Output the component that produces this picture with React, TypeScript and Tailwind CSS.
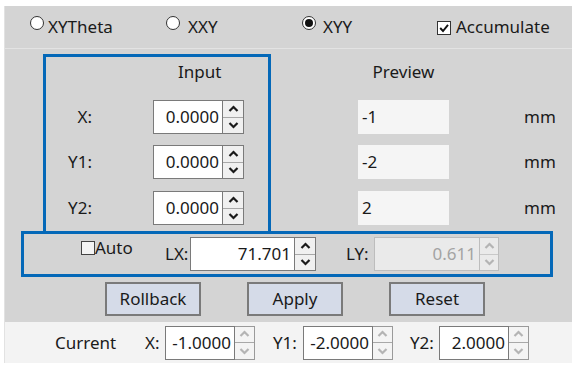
import React from "react";

const Up = ({ c }: { c: string }) => (
  <svg width="11" height="8" viewBox="0 0 11 8">
    <polyline points="1.5,6 5.5,2 9.5,6" fill="none" stroke={c} strokeWidth="2.2" />
  </svg>
);
const Down = ({ c }: { c: string }) => (
  <svg width="11" height="8" viewBox="0 0 11 8">
    <polyline points="1.5,2 5.5,6 9.5,2" fill="none" stroke={c} strokeWidth="2.2" />
  </svg>
);

function Spin({
  value,
  textW,
  btnW,
  disabled = false,
  lightArrows = false,
}: {
  value: string;
  textW: string;
  btnW: string;
  disabled?: boolean;
  lightArrows?: boolean;
}) {
  const arrow = disabled || lightArrows ? "#b4b4b4" : "#1a1a1a";
  return (
    <div className="flex h-[34px]">
      <div
        className={`${textW} h-full flex items-center justify-end pr-[3px] border ${
          disabled
            ? "bg-[#eaeaea] border-[#bdbdbd] text-[#a3a3a3]"
            : "bg-white border-[#7a7a7a] text-[#1a1a1a]"
        }`}
      >
        {value}
      </div>
      <div
        className={`${btnW} h-full flex flex-col border border-l-0 ${
          disabled ? "border-[#bdbdbd] bg-[#eaeaea]" : lightArrows ? "border-[#9a9a9a] bg-[#f4f4f4]" : "border-[#7a7a7a] bg-[#f0f0f0]"
        }`}
      >
        <div
          className={`flex-1 flex items-center justify-center border-b ${
            disabled ? "border-[#c8c8c8]" : "border-[#a8a8a8]"
          }`}
        >
          <Up c={arrow} />
        </div>
        <div className="flex-1 flex items-center justify-center">
          <Down c={arrow} />
        </div>
      </div>
    </div>
  );
}

const Radio = ({ on }: { on?: boolean }) => (
  <div className="mt-[10px] w-[14px] h-[14px] rounded-full border border-[#333] bg-white flex items-center justify-center shrink-0">
    {on && <div className="w-[8px] h-[8px] rounded-full bg-[#111]" />}
  </div>
);

export default function App() {
  return (
    <div className="w-[579px] h-[372px] bg-white pt-[6px] pl-[4px] font-['Noto_Sans',sans-serif] text-[17px] leading-[22px] text-[#1a1a1a] overflow-hidden">
      <div className="w-[568px] border-l border-[#e2e2e2]">
        {/* gray area */}
        <div className="h-[316px] bg-[#d4d4d4]">
          {/* radio row */}
          <div className="h-[42px] flex items-start border-b border-[#e3e3e3] box-content">
            <div className="ml-[25px] w-[136px] flex items-start">
              <Radio />
              <span className="ml-[4px] mt-[10px]">XYTheta</span>
            </div>
            <div className="w-[136px] flex items-start">
              <Radio />
              <span className="ml-[8px] mt-[10px]">XXY</span>
            </div>
            <div className="w-[135px] flex items-start">
              <Radio on />
              <span className="ml-[7px] mt-[10px]">XYY</span>
            </div>
            <div className="flex items-start">
              <div className="mt-[15px] w-[14px] h-[14px] border border-[#333] bg-white flex items-center justify-center">
                <svg width="10" height="10" viewBox="0 0 10 10">
                  <polyline points="1.2,5 4,8 9,1.8" fill="none" stroke="#111" strokeWidth="1.9" />
                </svg>
              </div>
              <span className="ml-[5px] mt-[10px]">Accumulate</span>
            </div>
          </div>

          {/* input / preview */}
          <div className="flex mt-[5px]">
            <div className="ml-[38px] w-[228px] h-[177px] border-[3px] border-b-0 border-[#0468b8]">
              <div className="h-[43px] pt-[4px] pl-[132px]">Input</div>
              {[
                ["X:", "mt-0"],
                ["Y1:", "mt-[11px]"],
                ["Y2:", "mt-[12px]"],
              ].map(([l, m]) => (
                <div key={l} className={`flex items-center h-[34px] ${m}`}>
                  <div className="w-[46px] text-right">{l}</div>
                  <div className="ml-[61px]">
                    <Spin value="0.0000" textW="w-[70px]" btnW="w-[21px]" />
                  </div>
                </div>
              ))}
            </div>
            <div className="ml-[87px]">
              <div className="h-[46px] pt-[7px] w-[91px] text-center">Preview</div>
              {[
                ["-1", "mt-0"],
                ["-2", "mt-[11px]"],
                ["2", "mt-[12px]"],
              ].map(([v, m]) => (
                <div key={v} className={`flex items-center h-[34px] ${m}`}>
                  <div className="w-[91px] h-full bg-[#f5f5f5] flex items-center pl-[4px]">{v}</div>
                  <div className="ml-[75px]">mm</div>
                </div>
              ))}
            </div>
          </div>

          {/* Auto / LX / LY box */}
          <div className="ml-[16px] w-[532px] h-[46px] border-[3px] border-[#0468b8] flex items-center">
            <div className="ml-[57px] w-[84px] flex items-center self-start mt-[5px]">
              <div className="w-[14px] h-[14px] border border-[#444] bg-[#f4f4f4]" />
              <span className="leading-[18px]">Auto</span>
            </div>
            <div className="w-[25px]">LX:</div>
            <Spin value="71.701" textW="w-[105px]" btnW="w-[21px]" />
            <div className="ml-[30px] w-[28px]">LY:</div>
            <Spin value="0.611" textW="w-[106px]" btnW="w-[19px]" disabled />
          </div>

          {/* buttons */}
          <div className="flex mt-[5px] ml-[100px] gap-[46px]">
            {["Rollback", "Apply", "Reset"].map((b) => (
              <div
                key={b}
                className="w-[96px] h-[34px] border-2 border-[#7a7a7a] bg-[#d5dbe8] flex items-center justify-center"
              >
                {b}
              </div>
            ))}
          </div>
        </div>

        {/* current row */}
        <div className="h-[41px] bg-[#f3f3f3] flex items-center">
          <div className="ml-[50px] w-[90px]">Current</div>
          <div className="w-[20px]">X:</div>
          <Spin value="-1.0000" textW="w-[70px]" btnW="w-[20px]" lightArrows />
          <div className="ml-[18px] w-[30px]">Y1:</div>
          <Spin value="-2.0000" textW="w-[70px]" btnW="w-[20px]" lightArrows />
          <div className="ml-[17px] w-[29px]">Y2:</div>
          <Spin value="2.0000" textW="w-[70px]" btnW="w-[20px]" lightArrows />
        </div>
      </div>
    </div>
  );
}
